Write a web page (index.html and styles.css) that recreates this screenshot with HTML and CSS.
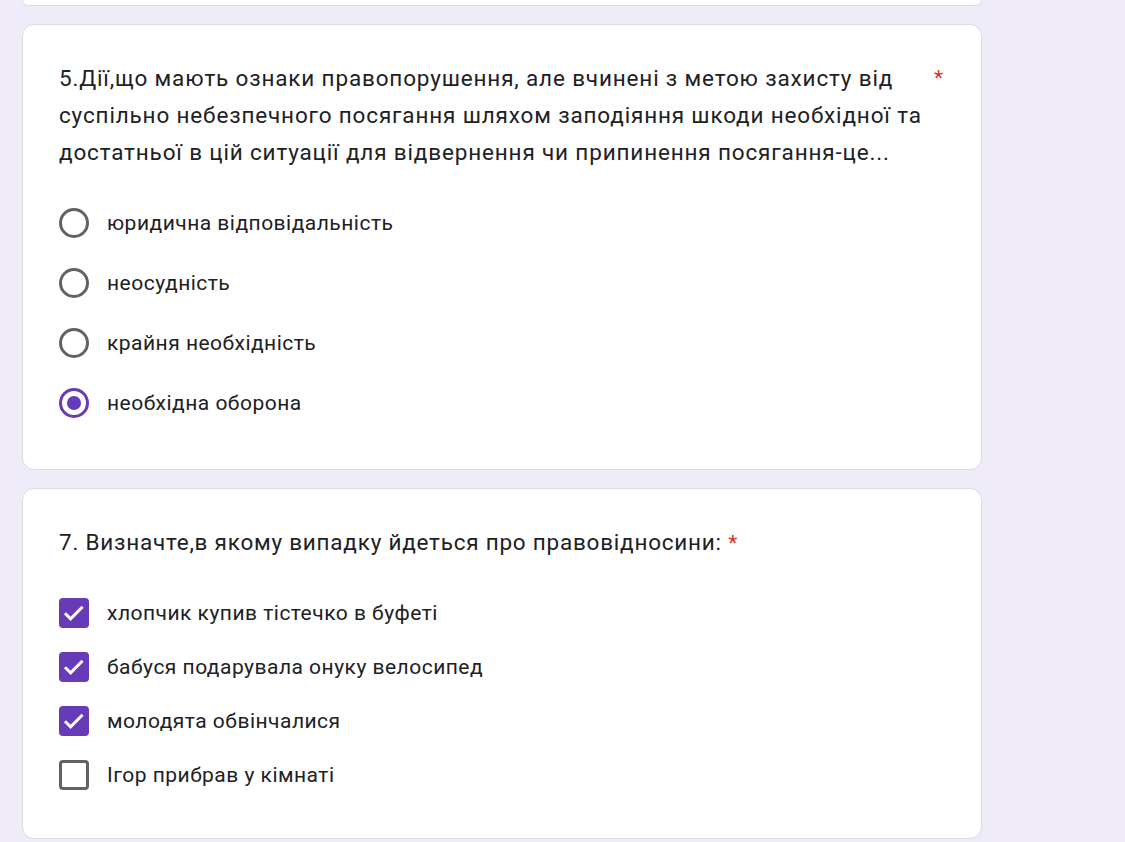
FILE: index.html
```html
<!DOCTYPE html>
<html lang="uk">
<head>
<meta charset="utf-8">
<link rel="stylesheet" href="styles.css">
</head>
<body>
<div class="page">
  <div class="card card-stub"></div>

  <div class="card">
    <div class="title-row">
      <div class="title q5">5.Дії,що мають ознаки правопорушення, але вчинені з метою захисту від суспільно небезпечного посягання шляхом заподіяння шкоди необхідної та достатньої в цій ситуації для відвернення чи припинення посягання-це...</div>
      <span class="req req-side">*</span>
    </div>
    <div class="options">
      <div class="opt radio-row"><span class="radio"></span><span class="label">юридична відповідальність</span></div>
      <div class="opt radio-row"><span class="radio"></span><span class="label">неосудність</span></div>
      <div class="opt radio-row"><span class="radio"></span><span class="label">крайня необхідність</span></div>
      <div class="opt radio-row"><span class="radio checked"></span><span class="label">необхідна оборона</span></div>
    </div>
  </div>

  <div class="card">
    <div class="title-row">
      <div class="title q7">7. Визначте,в якому випадку йдеться про правовідносини: <span class="req">*</span></div>
    </div>
    <div class="options opts7">
      <div class="opt check-row"><span class="checkbox checked"><svg viewBox="0 0 30 30"><path d="M6 15.2l5.6 5.6L23.6 8.8"/></svg></span><span class="label">хлопчик купив тістечко в буфеті</span></div>
      <div class="opt check-row"><span class="checkbox checked"><svg viewBox="0 0 30 30"><path d="M6 15.2l5.6 5.6L23.6 8.8"/></svg></span><span class="label">бабуся подарувала онуку велосипед</span></div>
      <div class="opt check-row"><span class="checkbox checked"><svg viewBox="0 0 30 30"><path d="M6 15.2l5.6 5.6L23.6 8.8"/></svg></span><span class="label">молодята обвінчалися</span></div>
      <div class="opt check-row"><span class="checkbox"></span><span class="label">Ігор прибрав у кімнаті</span></div>
    </div>
  </div>
</div>
</body>
</html>
```

FILE: styles.css
```css
* { box-sizing: border-box; }
html, body {
  margin: 0;
  padding: 0;
  background: #efebf8;
}
body {
  font-family: Roboto, "Noto Sans", Arial, sans-serif;
  color: #202124;
  height: 842px;
  overflow: hidden;
}
.page {
  padding-left: 22px;
  display: flex;
  flex-direction: column;
  gap: 18px;
}
.card {
  width: 960px;
  background: #fff;
  border: 1px solid #dadce0;
  border-radius: 12px;
  padding: 35px 36px 36px 36px;
}
.card-stub {
  height: 6px;
  padding: 0;
  border-top: none;
  border-radius: 0 0 12px 12px;
}
.title-row {
  display: flex;
  align-items: flex-start;
}
.title {
  flex: 1;
  line-height: 37px;
  padding-right: 8px;
}
.q5 {
  font-size: 22.5px;
  letter-spacing: 0.84px;
}
.q7 {
  font-size: 22.5px;
  letter-spacing: 0.77px;
}
.req {
  color: #d93025;
  font-size: 21px;
}
.req-side {
  width: 14px;
  margin-right: -3px;
  line-height: 37px;
}
.options {
  margin-top: 22px;
  display: flex;
  flex-direction: column;
}
.opts7 {
  margin-top: 24px;
}
.opt {
  display: flex;
  align-items: center;
  font-size: 21px;
  letter-spacing: 0.48px;
}
.radio-row { height: 60px; }
.check-row { height: 54px; }
.label { margin-left: 18px; }
.radio {
  width: 30px;
  height: 30px;
  border-radius: 50%;
  border: 3px solid #5f6368;
  flex: none;
  display: flex;
  align-items: center;
  justify-content: center;
}
.radio.checked {
  border-color: #673ab7;
}
.radio.checked::after {
  content: "";
  width: 14px;
  height: 14px;
  border-radius: 50%;
  background: #673ab7;
}
.checkbox {
  width: 30px;
  height: 30px;
  border-radius: 4px;
  border: 3px solid #5f6368;
  flex: none;
  display: flex;
}
.checkbox.checked {
  background: #673ab7;
  border: none;
}
.checkbox svg {
  width: 30px;
  height: 30px;
}
.checkbox path {
  fill: none;
  stroke: #fff;
  stroke-width: 3px;
}
```
